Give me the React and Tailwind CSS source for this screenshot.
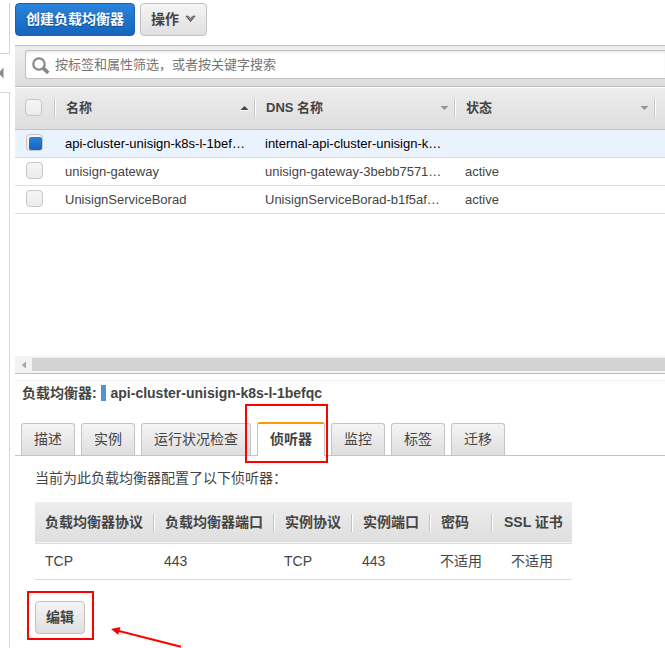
import React, { useState } from 'react';
import clsx from 'clsx';

const balancers = [
    { name: 'api-cluster-unisign-k8s-l-1bef…', dns: 'internal-api-cluster-unisign-k…', state: '' },
    { name: 'unisign-gateway', dns: 'unisign-gateway-3bebb7571…', state: 'active' },
    { name: 'UnisignServiceBorad', dns: 'UnisignServiceBorad-b1f5af…', state: 'active' },
];

const tabs = [
    { label: '描述', width: 'w-[54px]' },
    { label: '实例', width: 'w-[54px]' },
    { label: '运行状况检查', width: 'w-[110px]' },
    { label: '侦听器', width: 'w-[68px]' },
    { label: '监控', width: 'w-[54px]' },
    { label: '标签', width: 'w-[54px]' },
    { label: '迁移', width: 'w-[54px]' },
];

const listenerColumns = [
    { label: '负载均衡器协议', value: 'TCP', width: 'w-[120px]', pad: 'pl-[10px]', cellPad: 'pl-[10px]' },
    { label: '负载均衡器端口', value: '443', width: 'w-[120px]', pad: 'pl-[10px]', cellPad: 'pl-[9px]' },
    { label: '实例协议', value: 'TCP', width: 'w-[78px]', pad: 'pl-[10px]', cellPad: 'pl-[9px]' },
    { label: '实例端口', value: '443', width: 'w-[78px]', pad: 'pl-[10px]', cellPad: 'pl-[9px]' },
    { label: '密码', value: '不适用', width: 'w-[62px]', pad: 'pl-[10px]', cellPad: 'pl-[9px]' },
    { label: 'SSL 证书', value: '不适用', width: 'w-[79px]', pad: 'pl-[11px]', cellPad: 'pl-[18px]' },
];

const Checkbox = ({ checked, onClick }) => (
    <button
        type="button"
        onClick={onClick}
        className="mb-[2px] flex h-[17px] w-[17px] shrink-0 items-center justify-center rounded-[4px] border border-[#c6c6c6] bg-linear-to-b from-[#f6f6f6] to-[#ebebeb]"
    >
        {checked && <span className="ml-[2px] mt-[1px] h-[13px] w-[13px] shrink-0 rounded-[2px] bg-linear-to-b from-[#2b82d9] to-[#1365bd]"></span>}
    </button>
);

const Divider = ({ className }) => (
    <span className={clsx('h-[18px] w-[2px] shrink-0 border-l border-[#c3c3c3] bg-white', className)}></span>
);

const SortArrow = ({ up }) => (
    <svg width="9" height="6" viewBox="0 0 9 6" className="shrink-0">
        {up ? (
            <>
                <path d="M1 5.5h8" stroke="#fff" />
                <path d="M0.5 5L4.5 1L8.5 5z" fill="#444" />
            </>
        ) : (
            <path d="M0.5 1h8L4.5 5z" fill="#969696" />
        )}
    </svg>
);

const HeaderCell = ({ label, up }) => (
    <div className="flex w-[200px] shrink-0 items-center">
        <Divider />
        <span className="ml-[10px] flex-1 font-bold">{label}</span>
        <SortArrow up={up} />
        <span className="w-[5px]"></span>
    </div>
);

const App = () => {
    const [selected, setSelected] = useState(0);
    const [activeTab, setActiveTab] = useState('侦听器');

    return (
        <div className="relative flex h-[648px] w-[665px] overflow-hidden bg-white font-['Liberation_Sans','Noto_Sans_CJK_SC',sans-serif] text-[13px] leading-5 text-[#444]">
            <div className="flex w-[10px] shrink-0 flex-col">
                <div className="mt-[3px] h-[51px] border-b border-r border-[#d5d5d5]"></div>
                <div className="flex h-[38px] items-center">
                    <svg width="4" height="12" viewBox="0 0 4 12">
                        <path d="M3.5 0.5v11L-1.5 6z" fill="#8a8a8a" />
                    </svg>
                </div>
                <div className="flex-1 border-r border-t border-[#d5d5d5]"></div>
            </div>

            <div className="ml-[5px] flex min-w-0 flex-1 flex-col">
                <div className="flex h-[45px] shrink-0 gap-[5px] pt-[3px]">
                    <button type="button" className="flex h-[33px] w-[120px] items-center justify-center rounded-[4px] border border-[#1c62b2] bg-linear-to-b from-[#2b84dc] to-[#1465bb] pb-px text-[14px] font-bold text-white [text-shadow:0_1px_1px_#0b4a8e]">
                        创建负载均衡器
                    </button>
                    <button type="button" className="flex h-[33px] w-[67px] items-center rounded-[4px] border border-[#c1c1c1] bg-linear-to-b from-[#f5f5f5] to-[#dfdfdf] pb-px pl-[10px] text-[14px] font-bold">
                        操作
                        <svg width="11" height="8" viewBox="0 0 11 8" className="mb-px ml-[6px]">
                            <path d="M1 1.2h2.2l2.3 2 2.3-2H10L5.5 6.6z" fill="#777" stroke="#444" strokeWidth="0.8" />
                            <path d="M2.5 1.2L5.5 3.8l3-2.6" fill="none" stroke="#999" />
                        </svg>
                    </button>
                </div>

                <div className="h-[42px] shrink-0 border-b border-t border-[#bfbfbf] bg-linear-to-b from-[#eeeeee] to-[#dedede] pl-[10px] pt-[4px]">
                    <div className="flex h-[29px] w-full items-center rounded-l-[3px] border border-r-0 border-[#c1c1c1] bg-white pl-[6px] shadow-[inset_0_2px_2px_#eeeeee]">
                        <svg width="18" height="18" viewBox="0 0 18 18" className="mt-[2px] shrink-0">
                            <circle cx="7" cy="7" r="5.7" fill="none" stroke="#888" strokeWidth="2.2" />
                            <path d="M11.2 11.2L16.3 15.8" stroke="#888" strokeWidth="3.6" />
                        </svg>
                        <span className="ml-[5px] text-[13px] text-[#757575]">按标签和属性筛选，或者按关键字搜索</span>
                    </div>
                </div>

                <div className="flex h-[43px] shrink-0 items-center border-b border-t border-b-[#c4c4c4] border-t-white bg-linear-to-b from-[#ededed] to-[#dedede] pb-px pl-[10px]">
                    <Checkbox />
                    <span className="w-[12px] shrink-0"></span>
                    <HeaderCell label="名称" up />
                    <HeaderCell label="DNS 名称" />
                    <HeaderCell label="状态" />
                    <Divider />
                </div>

                {balancers.map((item, i) => (
                    <div
                        key={item.name}
                        className={clsx('flex h-[28px] shrink-0 items-center border-b border-[#dcdcdc] pl-[11px]', selected === i && 'bg-[#eaf2fe] text-black')}
                    >
                        <Checkbox checked={selected === i} onClick={() => setSelected(i)} />
                        <span className="ml-[22px] w-[200px] shrink-0 whitespace-nowrap">{item.name}</span>
                        <span className="w-[200px] shrink-0 whitespace-nowrap">{item.dns}</span>
                        <span>{item.state}</span>
                    </div>
                ))}

                <div className="mt-[142px] flex h-[18px] shrink-0 border-b border-[#bfbfbf] bg-[#f3f3f3]">
                    <div className="flex w-[17px] shrink-0 items-center justify-center">
                        <svg width="5" height="8" viewBox="0 0 5 8">
                            <path d="M5 0.5v7L0.8 4z" fill="#a5a5a5" />
                        </svg>
                    </div>
                    <div className="mb-[2px] mt-[2px] flex-1 bg-[#d2d2d2]"></div>
                </div>

                <div className="mt-[6px] flex h-[42px] shrink-0 border-t border-[#ececec] pl-[7px] pt-[2px]">
                    <span className="w-[79px] text-[14px] font-bold">负载均衡器:</span>
                    <span className="mt-[2px] h-[16px] w-[5px] bg-[#5294d0]"></span>
                    <span className="ml-[4.5px] text-[14px] font-bold">api-cluster-unisign-k8s-l-1befqc</span>
                </div>

                <div className="flex h-[34px] shrink-0 items-end gap-[6px] border-b border-[#c4c4c4] pl-[6px]">
                    {tabs.map((tab) => (
                        <button
                            type="button"
                            key={tab.label}
                            onClick={() => setActiveTab(tab.label)}
                            className={clsx(
                                'flex items-center justify-center rounded-t-[3px] border-x pb-[2px] text-[14px]',
                                tab.label === activeTab
                                    ? '-mb-px h-[34px] border-t-2 border-x-[#c4c4c4] border-t-[#f90] bg-white font-bold'
                                    : 'h-[32px] border-t border-[#c4c4c4] bg-linear-to-b from-[#f5f5f5] to-[#dedede]',
                                tab.width
                            )}
                        >
                            {tab.label}
                        </button>
                    ))}
                </div>

                <div className="flex flex-col pl-[20px] pt-[12px]">
                    <p className="text-[14px]">当前为此负载均衡器配置了以下侦听器：</p>

                    <div className="mt-[14px] flex h-[42px] w-[537px] items-center border-b border-[#dcdcdc] bg-linear-to-b from-[#ededed] to-[#dedede] text-[14px] font-bold shadow-[inset_0_-1px_0_#f3f3f3]">
                        {listenerColumns.map((col, i) => (
                            <div key={col.label} className={clsx('flex shrink-0 items-center whitespace-nowrap', col.width, col.pad)}>
                                <span className="mb-[2px] flex-1">{col.label}</span>
                                {i < listenerColumns.length - 1 && <Divider />}
                            </div>
                        ))}
                    </div>
                    <div className="flex h-[36px] w-[537px] items-center border-b border-[#dcdcdc] pb-[2px] text-[14px]">
                        {listenerColumns.map((col) => (
                            <span key={col.label} className={clsx('shrink-0', col.width, col.cellPad)}>{col.value}</span>
                        ))}
                    </div>

                    <button type="button" className="mt-[21px] flex h-[33px] w-[50px] items-center justify-center rounded-[4px] border border-[#c1c1c1] bg-linear-to-b from-[#f5f5f5] to-[#dfdfdf] pb-[2px] text-[14px] font-bold">
                        编辑
                    </button>
                </div>
            </div>

            {/* red callouts over the page */}
            <div className="pointer-events-none absolute left-[245px] top-[404px] h-[59px] w-[83px] border-2 border-[#f00]"></div>
            <div className="pointer-events-none absolute left-[27px] top-[591px] h-[49px] w-[67px] border-2 border-[#f00]"></div>
            <svg width="72" height="22" viewBox="0 0 72 22" className="pointer-events-none absolute left-[111px] top-[626px]">
                <path d="M6 4.5L70 20.8" stroke="#f00" strokeWidth="2" />
                <path d="M0 3L9.5 1L7.2 8.8z" fill="#f00" />
            </svg>
        </div>
    );
};

export default App;
